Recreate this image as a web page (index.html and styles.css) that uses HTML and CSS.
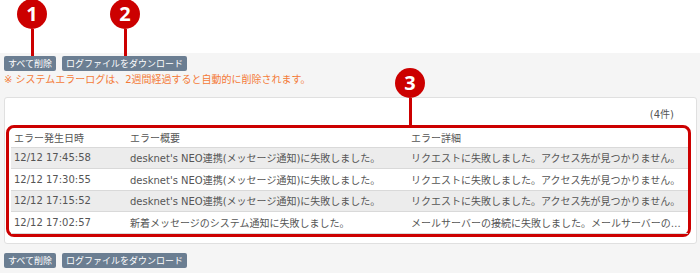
FILE: index.html
```html
<!DOCTYPE html>
<html>
<head>
  <meta charset="utf-8">
  <link rel="stylesheet" href="styles.css">
</head>
<body>
  <div class="page">
    <div class="top"></div>

    <div class="main">
      <div class="toolbar">
        <button class="btn">すべて削除</button>
        <button class="btn">ログファイルをダウンロード</button>
      </div>

      <div class="notice">※ システムエラーログは、2週間経過すると自動的に削除されます。</div>

      <div class="panel">
        <div class="count">(4件)</div>
        <div class="frame">
          <table class="log">
            <colgroup>
              <col class="c-date">
              <col class="c-sum">
              <col>
            </colgroup>
            <thead>
              <tr>
                <th>エラー発生日時</th>
                <th>エラー概要</th>
                <th>エラー詳細</th>
              </tr>
            </thead>
            <tbody>
              <tr>
                <td>12/12 17:45:58</td>
                <td>desknet's NEO連携(メッセージ通知)に失敗しました。</td>
                <td>リクエストに失敗しました。アクセス先が見つかりません。</td>
              </tr>
              <tr>
                <td>12/12 17:30:55</td>
                <td>desknet's NEO連携(メッセージ通知)に失敗しました。</td>
                <td>リクエストに失敗しました。アクセス先が見つかりません。</td>
              </tr>
              <tr>
                <td>12/12 17:15:52</td>
                <td>desknet's NEO連携(メッセージ通知)に失敗しました。</td>
                <td>リクエストに失敗しました。アクセス先が見つかりません。</td>
              </tr>
              <tr>
                <td>12/12 17:02:57</td>
                <td>新着メッセージのシステム通知に失敗しました。</td>
                <td class="cut">メールサーバーの接続に失敗しました。メールサーバーの…</td>
              </tr>
            </tbody>
          </table>
        </div>
      </div>

      <div class="toolbar bottom">
        <button class="btn">すべて削除</button>
        <button class="btn">ログファイルをダウンロード</button>
      </div>
    </div>

    <!-- callout markers -->
    <div class="pin pin-1"><span class="dot">1</span><span class="stem"></span></div>
    <div class="pin pin-2"><span class="dot">2</span><span class="stem"></span></div>
    <div class="pin pin-3"><span class="dot">3</span><span class="stem"></span></div>
  </div>
</body>
</html>
```

FILE: styles.css
```css
* {
  margin: 0;
  padding: 0;
  box-sizing: border-box;
}

body {
  font-family: "DejaVu Sans", "Noto Sans CJK JP", sans-serif;
  background: #f5f5f5;
  color: #555;
  overflow: hidden;
}

.page {
  position: relative;
  width: 700px;
  height: 273px;
}

.top {
  height: 53px;
  background: #fff;
}

.main {
  padding: 3px 3px 6px 4px;
}

.toolbar {
  display: flex;
  gap: 6px;
}

.toolbar.bottom {
  margin-top: 9px;
}

.btn {
  height: 15px;
  padding: 0 4px;
  font-family: "Noto Sans CJK JP", sans-serif;
  font-size: 9px;
  line-height: 15px;
  color: #fff;
  background: #6b7e92;
  border: none;
  border-radius: 2px;
}

.notice {
  margin-top: 2px;
  font-size: 10px;
  line-height: 14px;
  color: #f47a37;
}

.panel {
  margin-top: 10px;
  padding: 0 5px 6px 1px;
  background: #fff;
  border: 1px solid #e0e0e0;
  border-radius: 3px;
}

.count {
  margin-top: 10px;
  padding-right: 17px;
  font-size: 10px;
  line-height: 14px;
  text-align: right;
}

.frame {
  margin-top: 3px;
  padding-left: 2px;
  border: 3px solid #cc0000;
  border-radius: 8px;
}

.log {
  width: 100%;
  table-layout: fixed;
  border-collapse: collapse;
  font-size: 10px;
}

.log .c-date {
  width: 116px;
}

.log .c-sum {
  width: 281px;
}

.log th,
.log td {
  padding: 0 2px 0 3px;
  text-align: left;
  font-weight: normal;
  white-space: nowrap;
  overflow: hidden;
  border-bottom: 1px solid #d9d9d9;
}

.log td.cut {
  text-overflow: ellipsis;
}

.log th {
  height: 19px;
}

.log td {
  height: 21.6px;
}

.log tbody tr:nth-child(odd) {
  background: #ececec;
}

.pin {
  position: absolute;
  display: flex;
  flex-direction: column;
  align-items: center;
  width: 30px;
}

.pin .dot {
  width: 30px;
  height: 30px;
  border-radius: 50%;
  background: #cc0000;
  color: #fff;
  font-family: "Noto Sans", sans-serif;
  font-weight: 700;
  font-size: 20px;
  line-height: 30px;
  text-align: center;
}

.pin .stem {
  width: 3px;
  background: #cc0000;
}

.pin-1 {
  left: 17px;
  top: -1px;
}

.pin-2 {
  left: 110px;
  top: -1px;
}

.pin-1 .stem,
.pin-2 .stem {
  height: 27px;
}

.pin-3 {
  left: 395px;
  top: 68px;
}

.pin-3 .stem {
  height: 27px;
}
```
